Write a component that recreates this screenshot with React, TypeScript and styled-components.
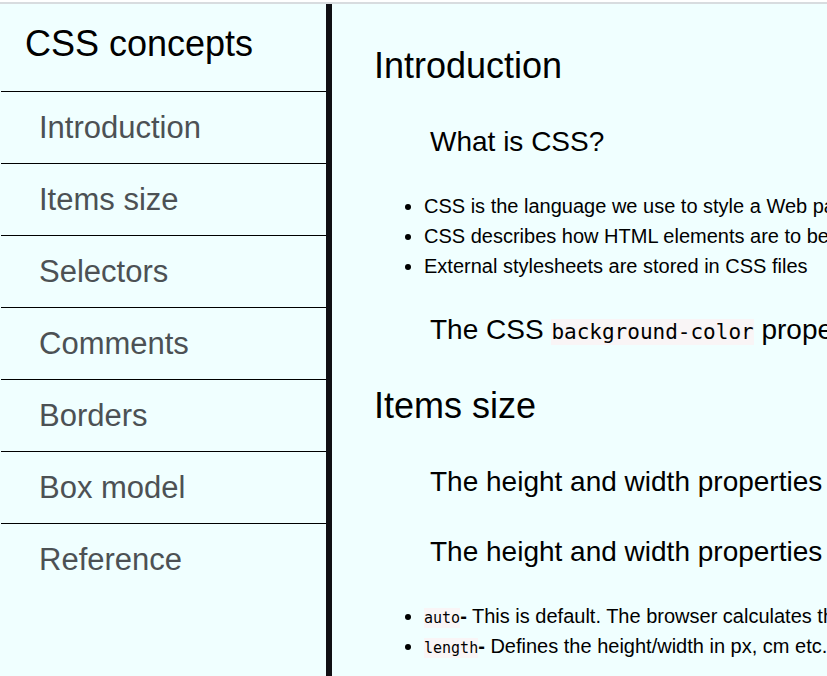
import React from "react";
import styled, { createGlobalStyle } from "styled-components";

const Global = createGlobalStyle`
  html { height: 100%; }
  body {
    margin: 0;
    height: 100%;
    overflow: hidden;
    background: #fff;
    color: #000;
    font-family: "Liberation Sans", Arial, sans-serif;
  }
  #root { height: 100%; }
`;

const Frame = styled.div`
  box-sizing: border-box;
  height: 100%;
  padding-top: 2px;
`;

const Page = styled.div`
  box-sizing: border-box;
  display: flex;
  height: 100%;
  border-top: 2px solid #d8dcdf;
  background: #f0ffff;
  overflow: hidden;
`;

const Sidebar = styled.nav`
  box-sizing: border-box;
  flex: 0 0 332px;
  border-right: 6px solid #101014;
`;

const SidebarTitle = styled.header`
  padding: 16px 25px 23px;
  font-size: 36px;
  line-height: 48px;
`;

const Menu = styled.ul`
  list-style: none;
  margin: 0;
  padding: 0 0 0 1px;
`;

const MenuLink = styled.a`
  display: block;
  padding: 16px 38px 15px;
  border-top: 1px solid #000;
  color: #4c5154;
  font-size: 31px;
  line-height: 40px;
  text-decoration: none;
`;

const Main = styled.main`
  flex: 1;
  min-width: 0;
  padding: 7px 0 0 42px;
  overflow: hidden;
  white-space: nowrap;
`;

const Section = styled.section`
  padding-top: 28px;
`;

const SectionTitle = styled.h1`
  margin: 0;
  font-size: 36px;
  font-weight: 400;
  line-height: 54px;
`;

const Topic = styled.h2`
  margin: 0;
  padding: 28px 56px 0;
  font-size: 28px;
  font-weight: 400;
  line-height: 42px;
`;

const Points = styled.ul`
  margin: 0;
  padding: 28px 0 0 50px;
  font-size: 20px;
  line-height: 30px;
`;

const Code = styled.code<{ $small?: boolean }>`
  padding: 1px 0;
  background: #f9f5f6;
  font-family: Consolas, "DejaVu Sans Mono", "Liberation Mono", monospace;
  font-size: ${(p) => (p.$small ? 15 : 21)}px;
  line-height: 1;
`;

const links = ["Introduction", "Items size", "Selectors", "Comments", "Borders", "Box model", "Reference"];

export default function App() {
  return (
    <Frame>
      <Global />
      <Page>
        <Sidebar>
          <SidebarTitle>CSS concepts</SidebarTitle>
          <Menu>
            {links.map((label) => (
              <li key={label}>
                <MenuLink href={"#" + label.replace(" ", "_")}>{label}</MenuLink>
              </li>
            ))}
          </Menu>
        </Sidebar>
        <Main>
          <Section id="Introduction">
            <SectionTitle>Introduction</SectionTitle>
            <Topic>What is CSS?</Topic>
            <Points>
              <li>CSS is the language we use to style a Web page</li>
              <li>CSS describes how HTML elements are to be displayed</li>
              <li>External stylesheets are stored in CSS files</li>
            </Points>
            <Topic>
              The CSS <Code>background-color</Code> property
            </Topic>
          </Section>
          <Section id="Items_size">
            <SectionTitle>Items size</SectionTitle>
            <Topic>The height and width properties</Topic>
            <Topic>The height and width properties</Topic>
            <Points>
              <li><Code $small>auto</Code><b>-</b> This is default. The browser calculates the height and width</li>
              <li><Code $small>length</Code><b>-</b> Defines the height/width in px, cm etc.</li>
            </Points>
          </Section>
        </Main>
      </Page>
    </Frame>
  );
}
